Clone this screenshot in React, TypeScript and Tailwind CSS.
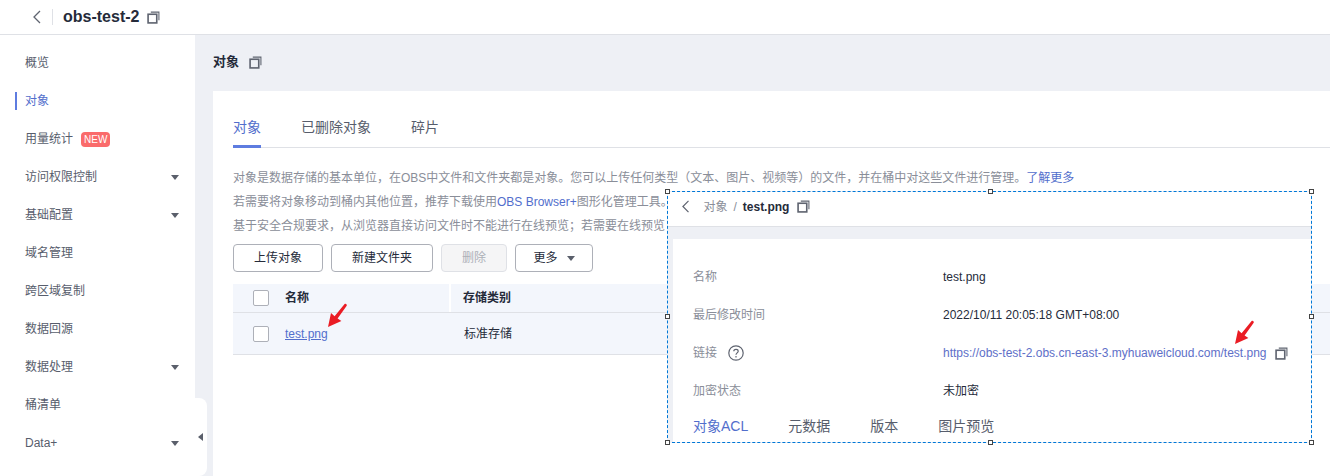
const font = { fontFamily: '"Liberation Sans", "Noto Sans CJK SC", sans-serif' };

function CopyIcon({ className = "" }: { className?: string }) {
  return (
    <svg viewBox="0 0 12 12" width="13" height="13" className={className} fill="none" stroke="#5f6470">
      <rect x="1" y="3" width="8" height="8" strokeWidth="1.5" />
      <path d="M3.5 1h7.5v7.5" strokeWidth="1" />
    </svg>
  );
}

function Back({ h = 14 }: { h?: number }) {
  return (
    <svg viewBox="0 0 8 14" width={(h * 8) / 14} height={h} fill="none" stroke="#5f6470" strokeWidth="1.3">
      <path d="M7 1 1 7l6 6" />
    </svg>
  );
}

function Caret({ className = "" }: { className?: string }) {
  return (
    <svg viewBox="0 0 8 5" width="8" height="5" className={className} fill="#5a5f6b">
      <path d="M0 0h8L4 5z" />
    </svg>
  );
}

function RedArrow({ className }: { className: string }) {
  return (
    <svg viewBox="0 0 20 25" width="20" height="25" className={className} fill="#ea1c24">
      <path d="M0 24 3 10l3.6 3.2L16.6 1c1-.9 2.8.4 2.1 1.7L9.6 15.6 13.4 18z" />
    </svg>
  );
}

function Handle({ className }: { className: string }) {
  return <div className={`absolute h-[5px] w-[5px] border border-[#444] bg-white ${className}`} />;
}

const menu: [string, boolean?, boolean?][] = [
  ["概览"],
  ["对象"],
  ["用量统计", false, true],
  ["访问权限控制", true],
  ["基础配置", true],
  ["域名管理"],
  ["跨区域复制"],
  ["数据回源"],
  ["数据处理", true],
  ["桶清单"],
  ["Data+", true],
];

function Sidebar() {
  return (
    <aside className="w-[192px] shrink-0 bg-white pt-[9px]">
      {menu.map(([label, caret, isNew], i) => (
        <div key={label} className="relative flex h-[38px] items-center pl-[22px] pr-4 text-xs">
          {i === 1 && <div className="absolute left-[12px] top-[10px] h-[18px] w-[2px] bg-[#5e7ce0]" />}
          <span className={i === 1 ? "text-[#526ecc]" : "text-[#575d6c]"}>{label}</span>
          {isNew && (
            <span className="ml-[8px] rounded-sm bg-[#fa6b6b] px-[3px] text-[10px] leading-[15px] text-white">NEW</span>
          )}
          {caret && <Caret className="ml-auto" />}
        </div>
      ))}
    </aside>
  );
}

function Btn({ children, w, disabled }: { children: React.ReactNode; w: string; disabled?: boolean }) {
  return (
    <div
      className={`flex h-[28px] items-center justify-center gap-[9px] rounded-sm border text-xs ${w} ${
        disabled ? "border-[#dfe1e6] bg-[#f5f5f6] text-[#adb0b8]" : "border-[#adb0b8] bg-white text-[#252b3a]"
      }`}
    >
      {children}
    </div>
  );
}

function Check() {
  return <div className="h-4 w-4 rounded-[2px] border border-[#adb0b8] bg-white" />;
}

function Overlay() {
  const rows: [string, React.ReactNode][] = [
    ["名称", <span className="text-[#252b3a]">test.png</span>],
    ["最后修改时间", <span className="text-[#252b3a]">2022/10/11 20:05:18 GMT+08:00</span>],
    [
      "链接",
      <span className="flex items-center gap-[8px] text-[#5e6fc8]">
        https://obs-test-2.obs.cn-east-3.myhuaweicloud.com/test.png
        <CopyIcon />
      </span>,
    ],
    ["加密状态", <span className="text-[#252b3a]">未加密</span>],
  ];
  return (
    <div className="absolute left-[667px] top-[191px] flex h-[252px] w-[645px] flex-col border border-dashed border-[#0078d7] bg-[#eef0f5]">
      <Handle className="left-[-3px] top-[-3px]" />
      <Handle className="left-[320px] top-[-3px]" />
      <Handle className="right-[-3px] top-[-3px]" />
      <Handle className="left-[-3px] top-[122px]" />
      <Handle className="right-[-3px] top-[122px]" />
      <Handle className="bottom-[-3px] left-[-3px]" />
      <Handle className="bottom-[-3px] left-[320px]" />
      <Handle className="bottom-[-3px] right-[-3px]" />
      <div className="flex h-[35px] items-center border-b border-[#dfe1e6] bg-white pb-[5px] pl-[14px] text-xs">
        <Back h={13} />
        <span className="ml-[14px] text-[#8a8e99]">对象</span>
        <span className="mx-[6px] text-[#8a8e99]">/</span>
        <span className="font-bold text-[#252b3a]">test.png</span>
        <CopyIcon className="ml-[8px]" />
      </div>
      <div className="ml-[5px] mt-[12px] flex-1 bg-white pl-[20px] pt-[19px] text-xs">
        {rows.map(([k, v], i) => (
          <div key={k} className="flex h-[38px] items-center">
            <div className="flex w-[250px] items-center gap-[11px] text-[#8a8e99]">
              {k}
              {i === 2 && (
                <svg viewBox="0 0 16 16" width="16" height="16" fill="none" stroke="#5f6470" strokeWidth="1.2">
                  <circle cx="8" cy="8" r="7.2" />
                  <path d="M5.8 6.2C5.8 3.7 10.2 3.7 10.2 6.2c0 1.7-2.2 1.7-2.2 3.6" />
                  <path d="M8 11v1.4" />
                </svg>
              )}
            </div>
            {v}
          </div>
        ))}
        <div className="flex h-[32px] items-center gap-[40px] text-sm text-[#575d6c]">
          <span className="text-[#526ecc]">对象ACL</span>
          <span>元数据</span>
          <span>版本</span>
          <span>图片预览</span>
        </div>
      </div>
    </div>
  );
}

export default function App() {
  return (
    <div style={font} className="relative h-[476px] w-[1330px] overflow-hidden bg-white">
      <header className="flex h-[35px] items-center border-b border-[#dfe1e6] pl-[33px]">
        <Back />
        <div className="ml-[11px] h-4 w-px bg-[#dfe1e6]" />
        <h1 className="ml-[10px] text-base font-bold text-[#252b3a]">obs-test-2</h1>
        <CopyIcon className="ml-[8px]" />
      </header>
      <div className="flex h-[441px] pl-[3px]">
        <Sidebar />
        <main className="flex-1 bg-[#eef0f5] pl-[18px]">
          <div className="mb-[2px] flex h-[54px] items-center text-[13px] font-bold text-[#252b3a]">
            对象
            <CopyIcon className="ml-[10px]" />
          </div>
          <section className="h-[400px] bg-white pl-[20px] pt-[26px]">
            <div className="flex h-[31px] gap-[40px] border-b border-[#dfe1e6] text-sm text-[#575d6c]">
              <span className="h-[31px] border-b-[3px] border-[#5e7ce0] text-[#526ecc]">对象</span>
              <span>已删除对象</span>
              <span>碎片</span>
            </div>
            <div className="mt-[18px] text-xs leading-6 text-[#8a8e99]">
              <p>
                对象是数据存储的基本单位，在OBS中文件和文件夹都是对象。您可以上传任何类型（文本、图片、视频等）的文件，并在桶中对这些文件进行管理。
                <span className="text-[#526ecc]">了解更多</span>
              </p>
              <p>
                若需要将对象移动到桶内其他位置，推荐下载使用<span className="text-[#526ecc]">OBS Browser+</span>图形化管理工具。
              </p>
              <p>基于安全合规要求，从浏览器直接访问文件时不能进行在线预览；若需要在线预览</p>
            </div>
            <div className="mt-[6px] flex gap-2">
              <Btn w="w-[90px]">上传对象</Btn>
              <Btn w="w-[102px]">新建文件夹</Btn>
              <Btn w="w-[66px]" disabled>删除</Btn>
              <Btn w="w-[78px]">更多<Caret /></Btn>
            </div>
            <div className="mt-3 text-xs text-[#252b3a]">
              <div className="flex h-[29px] items-center border-b border-[#dfe1e6] bg-[#f3f6fc] pl-[20px] font-bold">
                <Check />
                <span className="ml-4 w-[166px] border-r-2 border-white leading-[28px]">名称</span>
                <span className="ml-[12px]">存储类别</span>
              </div>
              <div className="flex h-[42px] items-center border-b border-[#dfe1e6] bg-[#f3f6fc] pl-[20px]">
                <Check />
                <span className="ml-4 w-[179px] text-[#526ecc]"><span className="underline">test.png</span></span>
                <span>标准存储</span>
              </div>
            </div>
          </section>
        </main>
      </div>
      <div className="absolute left-[195px] top-[398px] flex h-[78px] w-[12px] items-center rounded-r-lg bg-white pl-[3px]">
        <svg viewBox="0 0 5 8" width="5" height="8" fill="#5a5f6b"><path d="M5 0v8L0 4z" /></svg>
      </div>
      <Overlay />
      <RedArrow className="absolute left-[328px] top-[303px]" />
      <RedArrow className="absolute left-[1235px] top-[320px]" />
    </div>
  );
}
